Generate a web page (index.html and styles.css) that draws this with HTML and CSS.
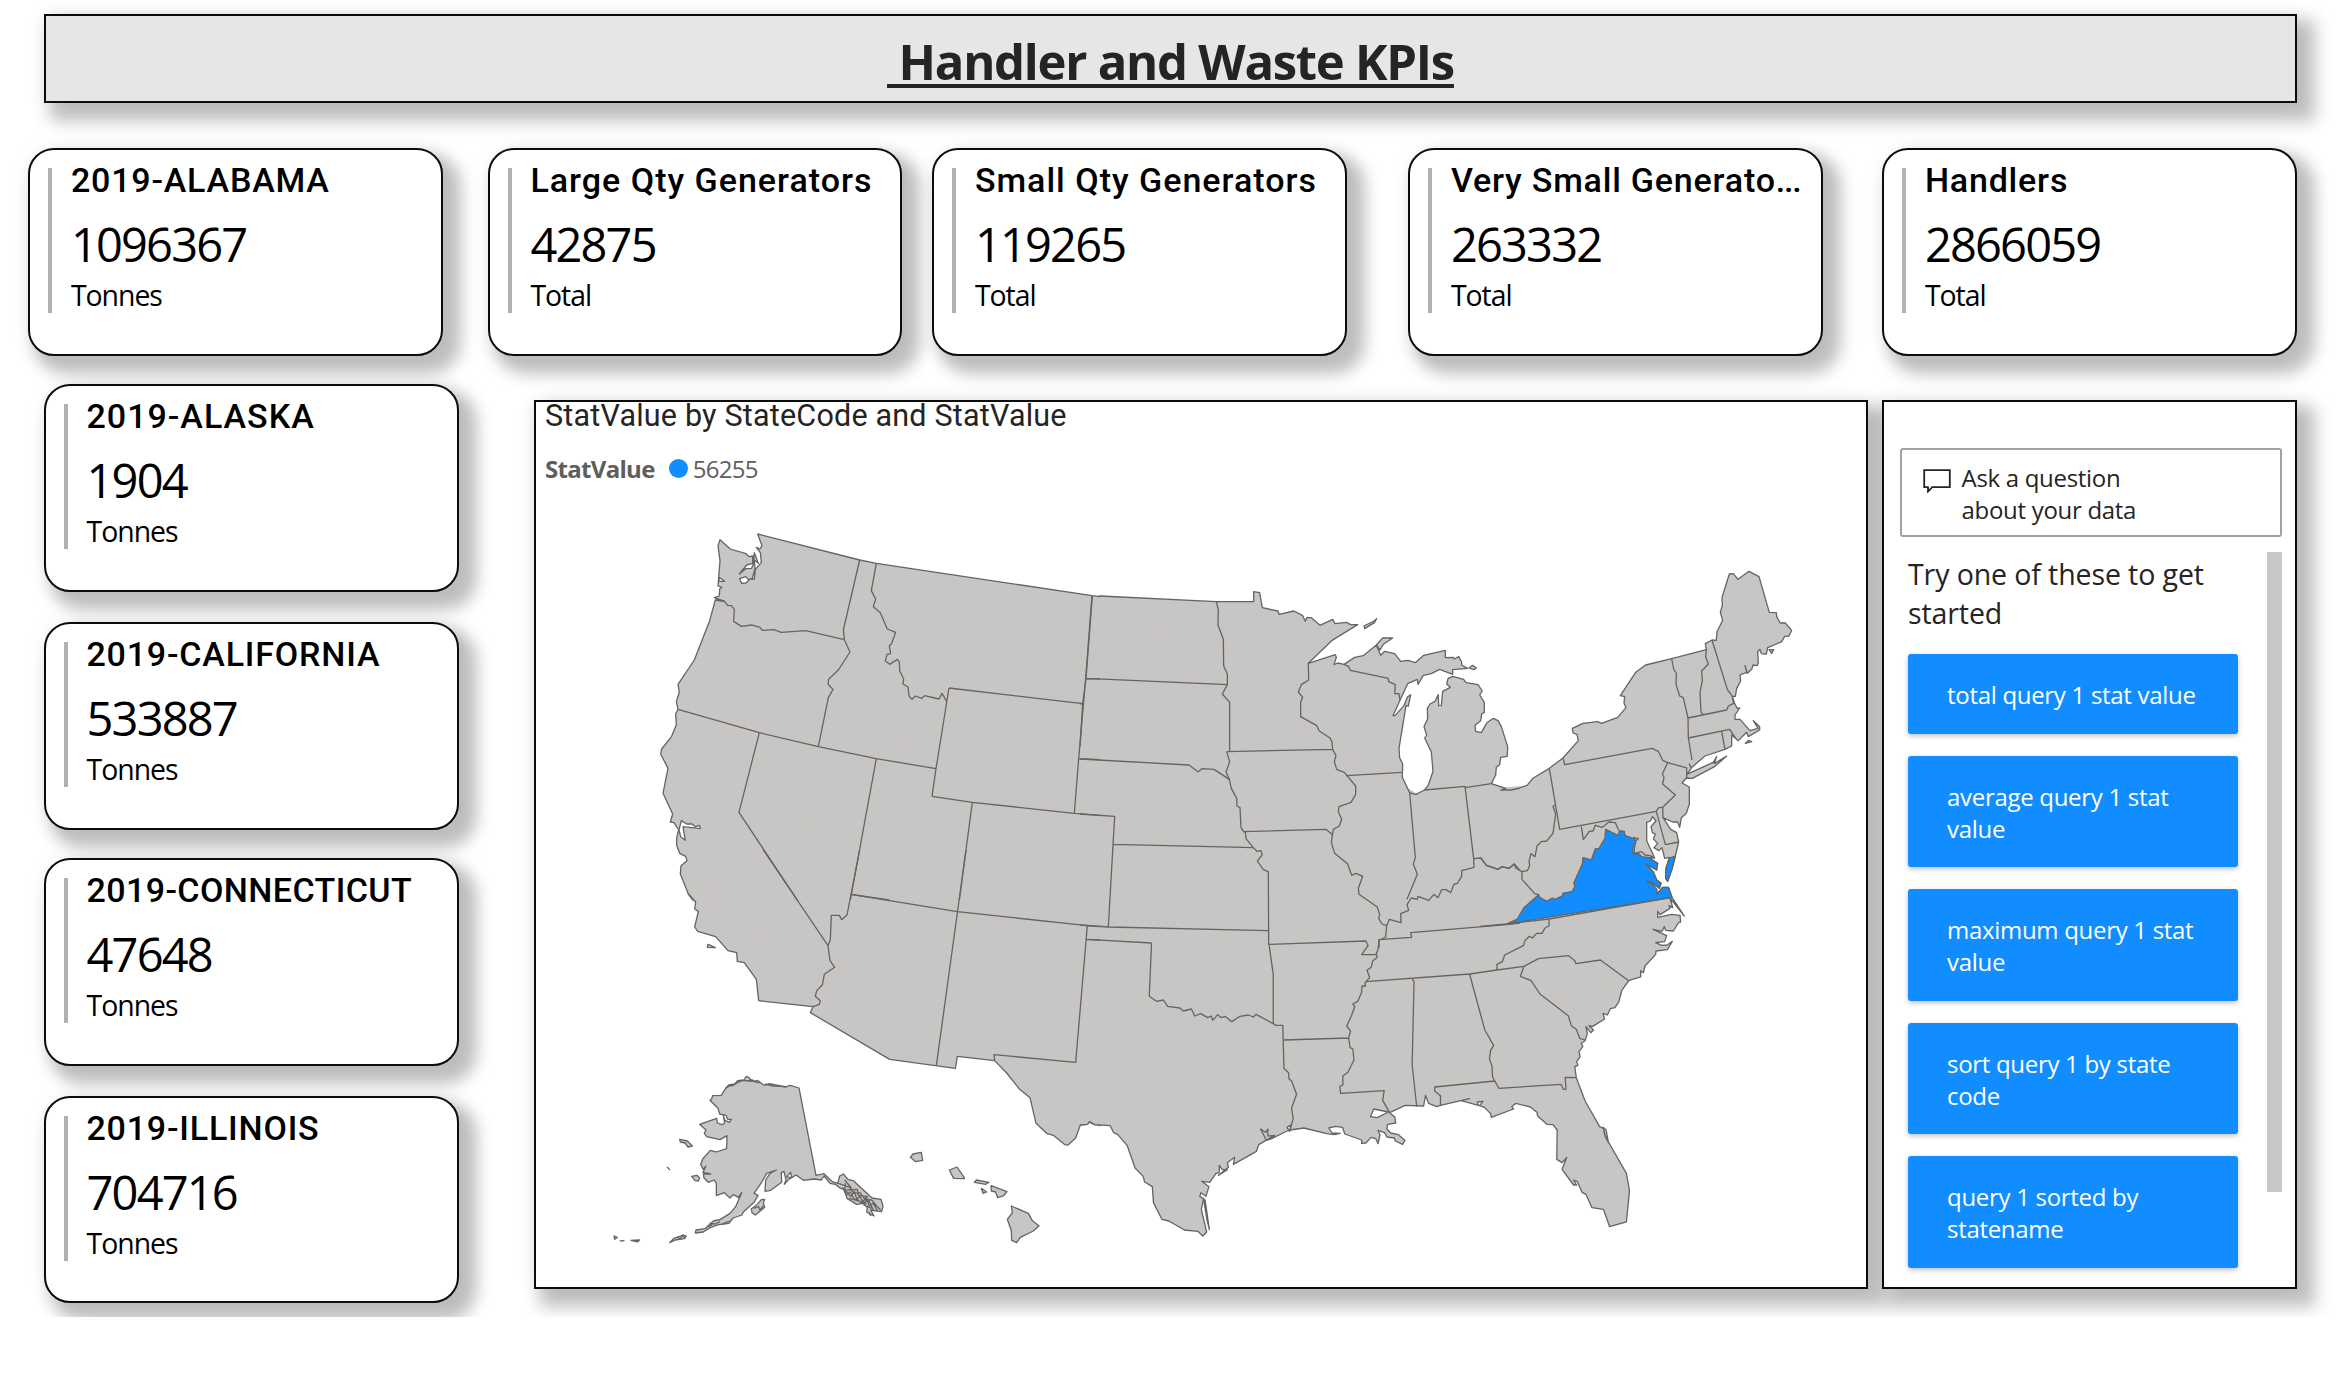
FILE: index.html
```html
<!DOCTYPE html>
<html lang="en">
<head>
<meta charset="utf-8">
<title>Handler and Waste KPIs</title>
<link rel="stylesheet" href="styles.css">
</head>
<body>
<div class="report">
  <header class="banner"><h1>&nbsp;Handler and Waste KPIs</h1></header>

  <section class="top-cards">
    <article class="card"><div class="card-body"><h2>2019-ALABAMA</h2><p class="value">1096367</p><p class="unit">Tonnes</p></div></article>
    <article class="card"><div class="card-body"><h2 class="loose">Large Qty Generators</h2><p class="value">42875</p><p class="unit">Total</p></div></article>
    <article class="card"><div class="card-body"><h2 class="loose">Small Qty Generators</h2><p class="value">119265</p><p class="unit">Total</p></div></article>
    <article class="card"><div class="card-body"><h2 class="clipped">Very Small Generato<span>...</span></h2><p class="value">263332</p><p class="unit">Total</p></div></article>
    <article class="card"><div class="card-body"><h2>Handlers</h2><p class="value">2866059</p><p class="unit">Total</p></div></article>
  </section>

  <main class="lower">
    <section class="side-cards">
      <article class="card"><div class="card-body"><h2 class="loose">2019-ALASKA</h2><p class="value">1904</p><p class="unit">Tonnes</p></div></article>
      <article class="card"><div class="card-body"><h2>2019-CALIFORNIA</h2><p class="value">533887</p><p class="unit">Tonnes</p></div></article>
      <article class="card"><div class="card-body"><h2 class="tight">2019-CONNECTICUT</h2><p class="value">47648</p><p class="unit">Tonnes</p></div></article>
      <article class="card"><div class="card-body"><h2>2019-ILLINOIS</h2><p class="value">704716</p><p class="unit">Tonnes</p></div></article>
    </section>

    <section class="panel map-panel">
      <h2 class="map-title">StatValue by StateCode and StatValue</h2>
      <div class="legend"><strong>StatValue</strong><i class="dot"></i><span>56255</span></div>
      <svg class="map" viewBox="536 502 1329 784" aria-label="Map of the United States">
        <!-- Heartland fill that joins the coastal regions -->
        <path class="inland" d="M693,900L1100,596L1415.7,794.7L1520,787.7L1628.3,980.7L1100,1125L995,1060L689,894Z"/>

        <!-- Pacific Northwest and Rockies -->
        <g transform="translate(600 500) scale(.33333)">
          <path class="land" d="M280,1200L265,1182L241,1122L243,1097L261,1082L257,1069L239,1060L230,1036L230,1013L236,990L222,968L211,966L218,942L189,880L204,805L182,762L185,747L215,709L229,674L227,642L234,628L229,605L238,576L234,553L283,480L329,362L346,300L372,303L343,293L358,288L359,267L366,262L354,258L356,232L360,182L354,137L360,119L391,147L438,161L447,170L458,168L458,190L440,195L418,222L437,206L455,205L460,193L463,158L475,190L463,180L465,205L457,235L445,239L437,230L419,236L425,250L438,249L450,237L463,237L466,208L484,187L481,158L469,142L480,147L486,137L473,102L779,180L829,190L1476,287L1500,290"/>
          <path class="bay" d="M244,962L260,972L276,972L286,980L298,976L301,986L249,980L256,1021L242,1010L237,990Z"/>
          <path class="bay" d="M357,232L374,244L357,244Z"/>
          <g class="borders">
            <path d="M346,300L372,303L383,316L394,317L403,328L401,364L424,379L455,375L480,382L487,391L521,389L544,397L617,392L733,419L750,456L715,510L686,538L684,552L699,568L685,593L655,740"/>
            <path d="M779,180L730,390L733,419M829,190L814,272L827,297L820,320L841,338L862,387L887,397L874,433L868,437L872,461L861,463L856,483L869,493L892,478L898,487L899,512L911,537L909,552L924,561L927,588L936,598L946,588L965,595L974,587L1017,597L1026,580L1040,604"/>
            <path d="M234,628L478,698L655,740L829,776L1008,806M478,698L417,937L593,1202M829,776L751,1200M1047,564L1008,806L996,889M1047,564L1448,611M996,889L1117,907L1423,940L1500,946M1117,907L1078,1200M1476,287L1457,536L1436,776L1423,940M1457,536L1500,537M1436,776L1500,779M753,1183L868,1200"/>
          </g>
        </g>

        <!-- Upper Midwest and Great Lakes -->
        <g transform="translate(1080 560) scale(.33333)">
          <path class="land" d="M60,108L409,125L521,125L521,95L539,98L547,143L594,153L597,163L642,153L668,167L676,184L680,173L694,173L720,196L758,178L765,191L799,187L812,194L833,194L755,242L685,310L766,284L769,292L762,314L773,309L792,313L824,292L850,287L889,255L908,234L938,234L910,253L900,270L889,255L902,286L914,274L944,281L962,304L984,301L1006,308L1031,286L1096,271L1096,293L1120,292L1123,297L1136,290L1145,306L1145,315L1163,325L1118,329L1118,343L1079,328L1054,341L1030,346L1014,373L1012,358L983,371L960,421L939,467L945,467L972,437L982,411L992,404L985,438L978,437L957,565L959,593L968,612L967,652L989,698L1007,704"/>
          <path class="land" d="M1007,704L1033,690L1044,678L1059,634L1054,576L1034,534L1040,525L1032,500L1043,476L1042,445L1050,432L1065,424L1075,404L1076,437L1084,436L1088,394L1111,382L1100,372L1104,356L1118,349L1151,358L1158,368L1194,374L1207,393L1199,405L1213,427L1213,457L1205,462L1202,482L1185,496L1187,514L1204,518L1221,488L1240,475L1254,482L1264,500L1283,560L1282,589L1262,592L1259,614L1249,622L1247,645L1234,671L1277,685L1262,690L1294,690L1320,684"/>
          <path class="land" d="M852,198L882,183L890,176L883,188L854,206ZM1167,324L1178,316L1189,324L1182,329Z"/>
          <g class="borders">
            <path d="M37,107L18,355L8,432L0,560M18,355L442,374M0,431L8,432M0,597L327,615L354,635L366,626L402,628L448,658"/>
            <path d="M409,125L415,150L414,195L430,238L431,318L442,342L442,374L427,402L449,427L449,575M440,575L449,605L438,636L448,658L454,685L470,715L471,738L480,743L483,803L491,815L496,816L498,836L520,863L531,874L543,872L547,884L532,903L550,929L565,935L566,1154"/>
            <path d="M440,575L758,568M685,310L686,360L664,374L655,396L668,412L662,426L662,470L710,497L718,513L750,534L756,546L758,568L768,586L763,604L770,628L793,637L827,678L827,703L813,727L777,740L775,755L785,777L778,798L760,808L754,847L764,880L803,912L815,946L828,940L848,949L835,985L837,1003L892,1041L899,1064L896,1076L906,1092L920,1097"/>
            <path d="M491,815L738,808L757,824M799,647L968,637M792,313L806,320L811,331L925,355L926,365L946,374L944,401L957,401L960,421"/>
            <path d="M0,762L104,769L85,1101M101,853L520,863M0,1095L85,1101L565,1112M22,1138L214,1149"/>
            <path d="M989,698L1006,893L1000,912L1012,943L981,1018M1033,690L1155,679L1181,896M1156,683L1234,671M1181,896L1203,894L1218,915L1255,928L1265,920L1288,925L1303,912L1320,932M1181,896L1182,922L1145,932L1145,949L1132,970L1122,973L1112,998L1098,989L1085,989L1074,1013L1062,1003L1046,1021L1014,1009L1012,1018L994,1014L981,1034L986,1051L962,1061L963,1088L928,1078L920,1097L917,1131L904,1138"/>
            <path d="M1320,1089L1280,1094L992,1118L995,1132L897,1139L897,1165"/>
          </g>
        </g>

        <!-- Northeast, mid-Atlantic and the Carolinas -->
        <g transform="translate(1480 550) scale(.33333)">
          <path class="land" d="M120,713L141,706L160,684L208,655L249,624L295,572L291,553L279,549L277,535L309,520L353,515L365,520L413,502L438,473L432,459L434,440L421,437L467,367L497,345L575,326L679,299L676,281L696,270L709,271L711,245L728,211L721,187L727,166L726,142L748,72L760,71L774,88L807,64L837,80L868,187L889,188L890,200L901,219L916,219L935,241L927,258L914,259L905,275L863,293L859,312L844,311L840,298L833,305L835,339L831,347L819,345L816,356L802,370L795,347L800,367L780,375L782,393L770,415L766,439L757,439L764,461L772,475L779,474L765,495L765,508L780,508L810,542L834,535L820,512L839,530L839,540L805,560L800,547L775,572L755,555L755,588L735,598L675,618L633,654L628,642L634,655L620,673L700,637L710,620L703,641L740,618L705,649L637,685L619,684L606,699L628,711L628,762L619,790L604,803L599,832L593,816L578,816L549,803L549,803L572,838L590,848L596,876L586,918L576,957L563,994L557,985L558,955L568,922L554,925L546,893L537,902L522,893L533,881L520,866L526,852L517,848L513,830L528,813L518,800L511,813L500,817L500,872L524,924L510,923L520,932L533,940L530,960L497,942L520,966L530,990L543,1000L538,1015L518,998L502,993L502,998L516,1000L530,1018L531,1032L548,1012L565,1012L576,1042L613,1098L570,1044L578,1073L567,1067L570,1075L540,1094L533,1084L533,1102L575,1093L600,1096L602,1116L596,1117L580,1143L557,1141L553,1130L546,1144L519,1138L560,1157L554,1175L527,1178L545,1186L562,1185L577,1174L562,1199L528,1203L527,1213L495,1248L490,1268L482,1262L482,1281L445,1292"/>
          <path class="land" d="M867,299L881,299L875,310ZM796,580L806,571L815,575Z"/>
          <path class="highlight" d="M80,1122L112,1107L132,1073L176,1034L180,1043L201,1054L217,1044L226,1048L248,1037L248,1030L277,1024L285,1009L281,1000L307,942L309,923L334,930L346,896L356,897L375,864L377,838L415,857L418,842L433,844L434,856L465,867L467,880L459,890L459,912L475,910L485,920L510,923L520,932L533,940L530,960L497,942L520,966L530,990L543,1000L538,1015L518,998L502,993L502,998L516,1000L530,1018L531,1032L548,1012L565,1012L576,1042Z"/>
          <path class="highlight" d="M568,924L586,918L576,957L563,994L557,985L558,955Z"/>
          <g class="borders">
            <path d="M208,655L239,838L529,784L536,773L548,772L586,735L548,702L552,682L547,672L563,638M249,624L254,644L516,595L535,604L548,631L563,638L620,654L620,684"/>
            <path d="M575,326L581,357L589,370L588,403L599,438L610,443L624,504L625,564L636,630M679,299L677,320L685,342L665,363L667,392L660,428L663,486L670,494M696,270L742,418L757,439L761,460L745,468L740,480L624,504M625,564L749,538L768,566M725,544L735,598M529,784L556,884L596,876M548,772L549,803"/>
            <path d="M304,829L310,869L328,844L339,843L346,826L367,832L387,816L406,818L416,841M459,862L475,866L467,874L465,880L462,910L485,905L495,915L510,917L524,924"/>
            <path d="M224,766L219,769L227,792L219,850L200,873L184,875L171,888L165,920L153,911L147,934L149,947L142,962L126,965L107,954L103,942L87,955L65,950L54,958L20,947L0,922M126,965L126,988L164,1031L176,1034"/>
            <path d="M0,1129L80,1122L207,1107L576,1042M207,1107L207,1128L195,1134L186,1150L170,1150L157,1164L148,1159L135,1172L130,1187L74,1215L67,1235L51,1243L51,1260"/>
          </g>
        </g>

        <!-- South and Gulf coast -->
        <g transform="translate(1080 880) scale(.38265 .33333)">
          <path class="land" d="M1434,302L1416,331L1408,366L1398,383L1386,386L1378,405L1367,400L1371,417L1339,440L1330,437L1342,450L1335,458L1322,440L1326,460L1320,482L1310,490L1314,500L1304,515L1307,530L1298,545L1301,556L1293,560L1297,593L1320,663L1358,740L1368,745L1372,768L1428,880L1436,932L1428,1026L1384,1040L1368,988L1338,983L1322,943L1312,937L1300,905L1290,900L1298,915L1290,915L1260,868L1272,832L1260,848L1246,838L1247,750L1236,734L1220,733L1196,708L1194,697L1177,681L1139,670L1128,680L1133,687L1075,712L1073,701L1057,682L1044,677L1053,664L1038,666L1041,676L996,662L1018,656L942,676L932,680L911,670L903,646L898,678L850,676L809,698L823,712L825,729L804,733L802,747L812,759L832,764L849,781L843,793L824,783L822,774L802,771L796,758L779,751L784,765L779,791L773,776L761,772L747,789L736,790L736,780L692,762L686,742L668,739L650,744L659,759L680,760L664,764L645,761L585,744L549,750L541,753L501,776L487,781L472,747L485,757L491,747L491,768L509,766L467,794L461,814L401,853L404,832L385,848L388,862L362,886L385,869L372,869L364,856L364,877L355,881L339,907L318,904L337,920L329,949L316,938L313,950L323,955L317,988L331,1056L321,1068L308,1054L273,1050L232,1023L214,1018L192,968L189,920L169,906L165,889L144,864L123,796L98,763L88,758L79,737L38,734L23,726L18,733L0,734"/>
          <path class="bay" d="M759,710L768,687L806,696L777,713ZM541,742L551,735L548,754Z"/>
          <path class="land" d="M323,958L327,960L338,1049L332,1020ZM1367,742L1375,750L1381,788L1373,768Z"/>
          <g class="borders">
            <path d="M187,188L181,349L200,364L218,360L229,379L261,384L270,393L291,387L300,408L315,401L334,413L343,408L347,421L360,404L369,413L379,409L397,425L418,409L440,405L453,411L460,403L505,431L512,436L530,436L533,565L545,578L546,596L553,603L566,643L553,684L557,716L549,750"/>
            <path d="M494,193L505,283L505,431M494,193L747,183L753,197L736,224L774,223L779,207L782,178M774,223L777,232L765,243L761,262L750,271L757,293L745,308L746,318L737,318L736,337L726,364L713,372L718,380L709,408L697,438L707,453L702,474L706,503L713,507L716,540L700,577L687,588L687,615L679,619L681,640L795,632L791,661L809,698M533,480L702,474"/>
            <path d="M747,305L1018,282L1090,270L1160,259M868,297L873,304L868,555L880,680M1018,282L1058,450L1081,497L1073,511L1070,537L1077,559L1078,591L1095,625L1257,613L1263,628L1270,628L1268,592L1297,593M1084,603L927,621L927,633L942,647L942,676"/>
            <path d="M1434,302L1360,240L1296,251L1293,242L1277,227L1198,236L1160,259L1151,289L1179,302L1202,342L1276,407L1284,437L1297,448L1306,475L1320,480"/>
          </g>
        </g>

        <!-- Southwest, Alaska and Hawaii -->
        <g transform="translate(600 850) scale(.33333)">
          <path class="land" d="M1500,825L1484,824L1468,815L1463,823L1441,825L1427,864L1404,885L1395,884L1360,856L1340,850L1308,820L1290,743L1258,717L1220,669L1184,632"/>
          <path class="land" d="M1184,632L1072,619L1066,655L869,628L631,488L639,470L476,452L469,388L433,338L412,334L410,308L384,302L347,260L293,244L284,231L295,184L284,177L287,156L265,131"/>
          <path class="land" d="M322,292L324,283L346,293Z"/>
          <g class="borders">
            <path d="M490,0L684,287L691,270L694,196L718,196L725,209L741,195L779,0M753,133L1072,185L1462,227L1500,230M1098,0L1009,647M684,287L690,332L704,352L673,373L667,405L650,422L646,439L661,452L658,463L639,470M1462,227L1427,637L1182,614L1184,632M1460,268L1500,270"/>
          </g>
          <path class="land" d="M597,714L571,706L556,711L509,701L492,706L474,692L452,694L449,684L439,679L432,690L413,692L404,702L386,705L377,715L364,736L338,737L334,749L330,751L354,775L359,792L378,796L383,808L394,808L388,817L375,811L370,797L374,819L367,824L352,819L350,805L299,823L318,840L313,850L320,860L360,869L381,857L380,896L348,906L331,901L308,927L302,944L310,958L318,948L309,967L332,972L310,972L312,984L325,997L343,990L349,1000L349,1037L373,1028L390,1044L400,1034L415,1042L425,1028L407,1070L390,1090L361,1108L340,1113L315,1136L288,1140L286,1149L310,1146L330,1133L356,1124L387,1120L399,1104L426,1095L430,1086L463,1056L474,1036L462,1030L483,1000L500,970L529,960L510,970L497,990L495,1024L512,1021L545,997L544,968L552,964L558,990L553,1003L566,988L574,984L560,980L572,967L575,983L588,975L610,991L643,987L664,990L672,978L690,1000L706,1003L721,1015L734,1018L741,1045L770,1063L790,1060L802,1073L800,1086L822,1098L812,1080L838,1084L845,1085L849,1068L843,1048L816,1044L761,993L744,988L730,972L719,978L713,1000L697,995L672,971L648,976Z"/>
          <path class="borders" d="M715,1000L750,1012L760,1030L780,1028L795,1048L815,1050L830,1068L842,1080M728,1012L738,1035L750,1026L765,1050L780,1040L790,1058L806,1052L822,1084M736,1000L735,1020L752,1040L763,1024L770,1046L785,1060L798,1042L808,1068L820,1060L832,1082M740,1020L772,1018L775,1036L802,1040L792,1065L815,1075M734,990L755,1015M806,1085L812,1098M748,1045L780,1054L800,1062M376,715L388,708L400,706L412,698L428,691L446,693L460,690M450,688L470,697L480,698M495,702L520,708L560,710"/>
          <path class="land" d="M454,1076L471,1064L484,1049L494,1048L490,1060L494,1072L466,1095L456,1088ZM239,868L262,873L277,888L264,891L255,879L241,876ZM275,979L291,976L299,984L295,993L285,992ZM209,1178L222,1165L250,1155L259,1158L253,1166L226,1170ZM93,1171L119,1170L112,1176ZM42,1158L52,1162L44,1168ZM61,1173L72,1172ZM202,952L209,959Z"/>
          <path class="borders" d="M324,1130L335,1125L330,1120L345,1122L360,1115M365,1124L377,1118L390,1113M232,1160L240,1168L248,1155L256,1166M461,1075L476,1070L480,1080L490,1068"/>
          <path class="land" d="M931,922L939,912L964,907L968,931L947,935ZM1048,960L1071,951L1093,983L1093,986L1061,985ZM1123,997L1129,990L1167,997L1158,1003ZM1144,1015L1160,1026L1149,1030ZM1173,1007L1221,1025L1210,1038L1193,1043L1187,1026L1174,1023ZM1234,1068L1285,1090L1297,1112L1317,1127L1300,1143L1261,1162L1250,1178L1235,1171L1234,1142L1222,1108L1237,1088Z"/>
        </g>
      </svg>
    </section>

    <aside class="panel qna">
      <div class="ask">
        <svg class="chat" viewBox="0 0 28 24"><path d="M1.2 1.2h25.6v17H9.2L5 22.6v-4.4H1.2z"/></svg>
        <p>Ask a question<br>about your data</p>
      </div>
      <div class="suggestions">
        <div class="list">
          <p class="hint">Try one of these to get started</p>
          <button>total query 1 stat value</button>
          <button>average query 1 stat value</button>
          <button>maximum query 1 stat value</button>
          <button>sort query 1 by state code</button>
          <button>query 1 sorted by statename</button>
        </div>
        <div class="scrollbar"></div>
      </div>
    </aside>
  </main>
</div>
</body>
</html>
```
FILE: styles.css
```css
* { box-sizing: border-box; margin: 0; padding: 0; }

body {
  background: #fff;
  color: #000;
  font-family: "Open Sans", "Noto Sans", sans-serif;
}

.report {
  width: 2350px;
  height: 1317px;
  padding-top: 14px;
  overflow: hidden;
}

.banner, .card, .panel {
  border: 2px solid #0c0c0c;
  background: #fff;
  box-shadow: 12px 12px 16px 6px rgba(0, 0, 0, .25), 0 0 24px rgba(0, 0, 0, .04);
}

.banner {
  width: 2253px;
  height: 89px;
  margin-left: 44px;
  background: #e6e6e6;
  text-align: center;
}

.banner h1 {
  color: #252423;
  font-size: 49px;
  font-weight: 700;
  line-height: 91px;
  letter-spacing: -1.25px;
  text-decoration: underline;
  text-decoration-thickness: 4px;
  text-decoration-skip-ink: none;
  text-underline-offset: 4px;
}

.top-cards {
  display: grid;
  grid-template-columns: 459.5px 444.5px 476px 474px 414.5px;
  margin: 45px 0 0 28.4px;
}

.card {
  width: 414.5px;
  height: 207.5px;
  padding: 18px 6px 0 18px;
  border-radius: 26px;
}

.card-body {
  height: 145px;
  padding-left: 18.5px;
  border-left: 4px solid #b3b0ad;
  white-space: nowrap;
}

.card h2 {
  position: relative;
  top: -7px;
  font: 500 34px/39px Roboto, sans-serif;
  letter-spacing: .8px;
}

.card h2.tight { letter-spacing: .4px; }
.card h2.loose { letter-spacing: 1px; }
.card h2.clipped span { letter-spacing: -1.2px; }

.value {
  margin-top: 5px;
  font-size: 47px;
  line-height: 64px;
  letter-spacing: -1.8px;
}

.unit {
  font-size: 28.4px;
  line-height: 38px;
  letter-spacing: -1px;
}

.lower {
  display: flex;
  margin: 28.5px 0 0 44px;
}

.side-cards {
  display: grid;
  grid-template-rows: 238px 236px 237.5px 207.5px;
  width: 490px;
}

.panel {
  height: 889px;
  margin-top: 16px;
}

.map-panel { width: 1334px; }

.map-title {
  padding-left: 9px;
  color: #252423;
  font: 400 30.5px/37px Roboto, sans-serif;
  letter-spacing: .2px;
  margin-top: -5px;
}

.legend {
  display: flex;
  align-items: center;
  height: 34px;
  margin-top: 17px;
  padding-left: 9px;
  color: #605e5c;
  font-size: 24px;
  letter-spacing: -.7px;
}

.dot {
  width: 19px;
  height: 19px;
  margin: 0 5px 0 14px;
  border-radius: 50%;
  background: #118dff;
}

.map {
  display: block;
  width: 1329px;
  height: 784px;
  margin-top: 17px;
  overflow: visible;
}

.map path {
  fill: #c8c6c4;
  stroke: #666462;
  stroke-width: 1.3px;
  stroke-linejoin: round;
  vector-effect: non-scaling-stroke;
}

.map .inland { stroke: #c8c6c4; stroke-width: 3px; }
.map .bay { fill: #fff; }
.map .highlight { fill: #118dff; }
.map .borders path, .map path.borders { fill: none; }

.qna {
  width: 415px;
  margin-left: 14px;
  padding: 46px 13px 0 16px;
  color: #252423;
}

.ask {
  display: flex;
  height: 89px;
  padding: 12px 0 0 21px;
  border: 2px solid #a3a1a0;
  border-radius: 3px;
}

.ask p {
  margin-left: 10.5px;
  font-size: 24px;
  line-height: 31.5px;
  letter-spacing: -.3px;
}

.chat {
  width: 28px;
  height: 24px;
  margin-top: 7px;
  fill: none;
  stroke: #252423;
  stroke-width: 1.8;
}

.suggestions {
  display: flex;
  justify-content: space-between;
  margin-top: 15px;
}

.list {
  display: flex;
  flex-direction: column;
  gap: 22px;
  width: 338px;
  padding-left: 8px;
}

.hint {
  height: 80px;
  padding-top: 3px;
  font-size: 28.5px;
  line-height: 39px;
  letter-spacing: -.1px;
}

.list button {
  min-height: 79.5px;
  padding: 25px 39px 23px;
  border: 0;
  border-radius: 3px;
  background: #118dff;
  box-shadow: 0 2px 5px rgba(0, 0, 0, .25);
  color: #fff;
  font: 400 24px/31.75px "Open Sans", sans-serif;
  letter-spacing: -.3px;
  text-align: left;
}

.scrollbar {
  width: 15px;
  height: 640px;
  background: #c8c8c8;
}
```
